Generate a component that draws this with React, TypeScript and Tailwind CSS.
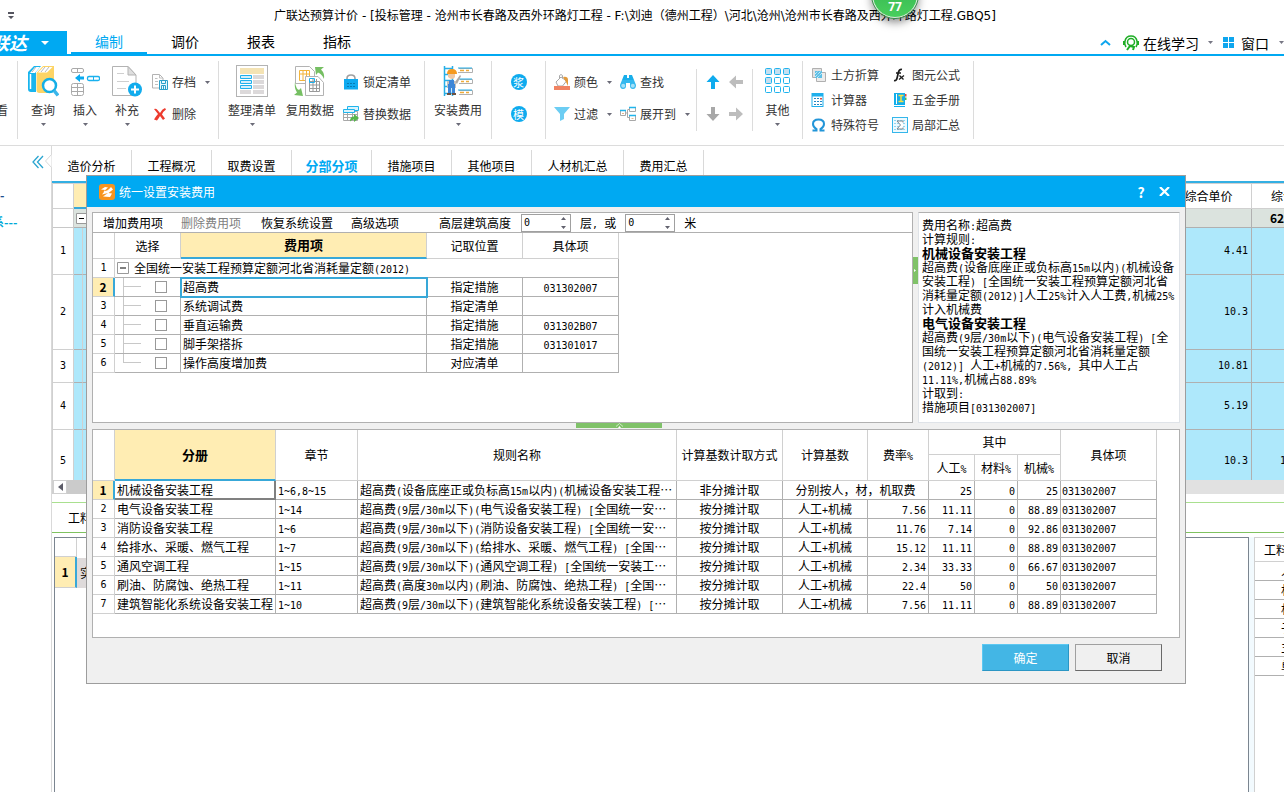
import React from 'react';

const mono = "font-['DejaVu_Sans_Mono',monospace] text-[10px]";

function Mix({ children }: { children: string }) {
  const parts = children.split(/([\x20-\x7e]+)/).filter((p) => p !== '');
  return (
    <>
      {parts.map((p, i) =>
        /^[\x20-\x7e]/.test(p) ? (
          <span key={i} className={`${mono} leading-none whitespace-pre`}>
            {p}
          </span>
        ) : (
          <React.Fragment key={i}>{p}</React.Fragment>
        ),
      )}
    </>
  );
}

function Caret({ className = 'text-[#6b6b78]' }: { className?: string }) {
  return (
    <svg width="5" height="3" viewBox="0 0 5 3" className={`shrink-0 ${className}`}>
      <path d="M0 0h5L2.5 3z" fill="currentColor" />
    </svg>
  );
}

/* ---------- ribbon icons ---------- */

const BooksIcon = () => (
  <svg width="32" height="32" viewBox="0 0 32 32">
    <path d="M1 7 7 1h7L9 7v20H4c-2 0-3-1-3-3z" fill="#19b5ee" />
    <path d="M3 8 8 2h5L8 8z" fill="#fff" />
    <path d="M3.500 9v15" stroke="#fff" strokeWidth="1.500" />
    <path d="M9.500 8 16 1h11v21l-4 6H12.500c-2 0-3-1-3-3z" fill="#fdd465" />
    <path d="M11 7.500 16.500 2h9L20 7.500z" fill="#fff" />
    <path d="m14 7 4-5m0 5 4-5M5 7l4-5" stroke="#b9b9b9" />
    <circle cx="22.500" cy="20.500" r="6.500" fill="#fff" stroke="#14aee6" strokeWidth="2.500" />
    <path d="m27 25.500 4 5" stroke="#3bb6ea" strokeWidth="3.500" />
  </svg>
);
const InsertIcon = () => (
  <svg width="30" height="32" viewBox="0 0 30 32" fill="none">
    <rect x="1.500" y="3.500" width="12" height="4" rx="1.500" stroke="#a9a9a9" />
    <path d="M7.500 4v3" stroke="#a9a9a9" />
    <path d="m5 13 5-4v2.500h4v3h-4V17z" fill="#0aabf0" />
    <rect x="17.500" y="11.500" width="12" height="4" rx="1.500" stroke="#19b1ee" strokeWidth="1.300" />
    <path d="M23.500 12v3" stroke="#19b1ee" />
    <rect x="1.500" y="18.500" width="12" height="12" rx="2" stroke="#a9a9a9" />
    <path d="M2 22.500h11M2 26.500h11M7.500 19v11" stroke="#a9a9a9" />
  </svg>
);
const SupplementIcon = () => (
  <svg width="32" height="32" viewBox="0 0 32 32" fill="none">
    <path d="M1.500 1.500H17L25 10v20.500H1.500z" fill="#fff" stroke="#b3b3b3" />
    <path d="M17 1.500V10h8z" fill="#dedede" stroke="#b3b3b3" />
    <path d="M6 8.500h7M6 16.500h12M6 23.500h9" stroke="#cfcfcf" />
    <circle cx="24" cy="24.500" r="7" fill="#12aced" />
    <path d="M24 20.500v8M20 24.500h8" stroke="#fff" strokeWidth="2" />
  </svg>
);
const ArrangeIcon = () => (
  <svg width="32" height="32" viewBox="0 0 32 32" fill="none">
    <rect x="0.500" y="0.500" width="31" height="31" fill="#fff" stroke="#b3b3b3" />
    <rect x="4" y="3" width="24" height="6" fill="#f4e3b4" />
    <path d="M17 10h11v4H17zM17 15h11v4H17zM17 20h11v4H17zM17 25h11v4H17zM4 25h11v4H4z" fill="#dcd9da" />
    <path d="M4.500 10.500h11v3h-11zM4.500 15.500h11v3h-11zM4.500 20.500h11v3h-11z" fill="#d5eefa" stroke="#1fb0ec" />
  </svg>
);
const ReuseIcon = () => (
  <svg width="32" height="32" viewBox="0 0 32 32" fill="none">
    <path d="M1.500 1.500h14l5 5v12h-19z" fill="#fff" stroke="#b3b3b3" />
    <path d="M5.500 5.500h10v10h-10zM5.500 9h10M9 5.500v10M12.500 5.500v10" stroke="#f3b53c" />
    <path d="M11.500 11.500H24l5.500 6v13h-18z" fill="#fff" stroke="#b3b3b3" />
    <path d="M15.500 16.500h10v10h-10zM15.500 20h10M15.500 23.500h10M19 14v12M22.500 14v12" stroke="#999" />
    <path d="M15.500 13.500h5v4h-5z" stroke="#1fb0ec" />
    <path d="M21 2h9l-3 2.500q4 4 3 9.500-2-5-6-6.500L22 10z" fill="#76bf63" />
    <path d="M1 17q1 7 4 8l2-2 2 8-9-1 3-2.500Q0 23 1 17z" fill="#76bf63" />
  </svg>
);
const InstallFeeIcon = () => (
  <svg width="32" height="32" viewBox="0 0 32 32" fill="none">
    <path d="M2.500 1v30M10.500 1v30M2 3.500h9M2 9.500h9M2 15.500h9M2 21.500h9M2 28.500h9" stroke="#27aee6" strokeWidth="1.500" />
    <path d="M17 3.500h13.500v4H16M18 14.500h12.500v4H17M17 25.500h13.500v4H17" stroke="#b0b0b0" />
    <path d="M16 3h14M17 14h13M16 25h14" stroke="#27aee6" />
    <path d="M18 5.500h4m2 0h3M19 16.500h3m2 0h3M18 27.500h4m2 0h3" stroke="#efac3c" strokeWidth="1.500" />
    <path d="M5 9q0-5 5-5t5 5z" fill="#f59a1f" />
    <path d="M6 9h7v3q-1 2-3 2t-4-2z" fill="#efc8a4" />
    <path d="m13 17 5-7 1 1-4 8z" fill="#b0a9a4" />
    <path d="M5 16h9v7H5z" fill="#c5c1be" />
    <path d="M7 15h5v4h1v9h-3v-5H9v5H6v-9h1z" fill="#3c86d8" />
    <path d="M5 28h4v2H5zM10 28h4v2h-4z" fill="#6d5140" />
  </svg>
);
const OtherIcon = () => (
  <svg width="26" height="26" viewBox="0 0 26 26" stroke="#1fb3ee">
    {[0, 1, 2].map((r) =>
      [0, 1, 2].map((c) => (
        <rect
          key={`${r}${c}`}
          x={0.5 + c * 9}
          y={0.5 + r * 9}
          width="6"
          height="6"
          rx="1"
          fill={r + c < 2 || r === 0 ? '#c5dff0' : '#fff'}
        />
      )),
    )}
  </svg>
);
const ArchiveIcon = () => (
  <svg width="16" height="16" viewBox="0 0 16 16" fill="none">
    <path d="M.5.500h7l3.500 3.500v10H.500z" fill="#fff" stroke="#b3b3b3" />
    <path d="M7.500.500V4H11M3 4.500h2.500M3 7.500h3M3 10.500h3" stroke="#c0c0c0" />
    <path d="M7.500 6.500h8v9h-8z" fill="#e9f7fd" stroke="#2a9fc9" />
    <path d="M9.500 6.500v3h4v-3M9.500 15v-3.500h4V15M11.500 12v3" stroke="#2a9fc9" />
  </svg>
);
const DeleteIcon = () => (
  <svg width="16" height="16" viewBox="0 0 16 16">
    <path d="M2 3q2-1 3.500 1L8 7q2-4 5-5l1 1.500q-3 2-4 5l3 4-2 1.500-3-4q-1 2-3 4.500l-3-1Q4 10 6 8z" fill="#ed3b2e" />
  </svg>
);
const LockIcon = () => (
  <svg width="16" height="16" viewBox="0 0 16 16" fill="none">
    <path d="M4 7V4.500Q4 1 8 1t4 3.500V7" stroke="#a0a0a0" strokeWidth="1.600" />
    <rect x="1" y="5" width="14" height="10.500" fill="#0faaf0" />
    <path d="M4 9.500h8M4 12.500h8" stroke="#087bb2" strokeDasharray="2 1" />
  </svg>
);
const ReplaceIcon = () => (
  <svg width="16" height="16" viewBox="0 0 16 16" fill="none">
    <path d="M4.500.500h11v4h-11z" fill="#d9f3fd" stroke="#20b5ec" />
    <path d="M.5 5.500h14v9H.500zM.5 8.500h14M.500 11.500h14M4.500 5v9M9.500 5v9" fill="#fff" stroke="#a8a8a8" />
    <path d="M.5 3.500h11v3H.500z" fill="#d9f3fd" stroke="#20b5ec" />
    <path d="M7 15.500q0-5 4-5V8l5 4-5 4v-2.500q-2 0-4 2z" fill="#57b54a" />
  </svg>
);
const ColorIcon = () => (
  <svg width="16" height="16" viewBox="0 0 16 16" fill="none">
    <path d="m2 8 5-5 5.500 4L8.500 12H4z" fill="#fff" stroke="#a8a8a8" />
    <path d="M5.500 4.500v-3q1.500-2 3 0v3" stroke="#a8a8a8" />
    <path d="M9 3q5-1 5 3v6l-2-4z" fill="#e39a3b" />
    <path d="M0 12h16v4H0z" fill="#f08362" />
  </svg>
);
const FilterIcon = () => (
  <svg width="16" height="16" viewBox="0 0 16 16">
    <path d="M0 1h16l-6 7v5l-4 2V8z" fill="#6ccdf3" />
  </svg>
);
const FindIcon = () => (
  <svg width="16" height="16" viewBox="0 0 16 16">
    <path d="M4 1h3v3h2V1h3l2 5H2z" fill="#18aeea" />
    <path d="M2 6h12l2 5q0 4-3 4t-3-3V9H6v3q0 3-3 3t-3-4z" fill="#34b8ee" />
    <circle cx="3.200" cy="11.700" r="2" fill="#a5e0f8" />
    <circle cx="12.800" cy="11.700" r="2" fill="#a5e0f8" />
  </svg>
);
const ExpandIcon = () => (
  <svg width="16" height="16" viewBox="0 0 16 16" fill="none" stroke="#a8a8a8">
    <path d="M.5 4.500h5v5h-5zM9.500 1.500h6v4h-6zM9.500 9.500h6v5h-6zM5.500 7h2m0-3v7.500M7.500 3.500h2m-2 8h2" />
    <path d="M0 4.500h6M9 1.500h7M9 9.500h7" stroke="#20b5ec" strokeWidth="1.500" />
    <path d="M2 7.500h2M11.500 12.500h2" stroke="#e6b98a" />
  </svg>
);
const Arrow = ({ className }: { className: string }) => (
  <svg width="14" height="14" viewBox="0 0 14 14" className={className}>
    <path d="m7 0 6.500 7H9v7H5V7H.500z" fill="currentColor" />
  </svg>
);
const EarthworkIcon = () => (
  <svg width="16" height="16" viewBox="0 0 16 16" fill="none">
    <path d="M1.500 1.500h9v9h-9z" fill="#e3e3e3" stroke="#b0b0b0" />
    <path d="M5.500 5.500h9v9h-9z" fill="#ececec" stroke="#b0b0b0" />
    <path d="M4 4h7v7H4z" fill="#5fc0e6" />
    <path d="m4 7 3-3m-3 6 6-6m-4 7 5-5" stroke="#fff" strokeDasharray="1 1" />
  </svg>
);
const CalcIcon = () => (
  <svg width="16" height="16" viewBox="0 0 16 16" fill="none">
    <path d="M.5 1h12v14H.500z" fill="#1fb0ec" />
    <path d="M1.500 4.500h10V14h-10z" fill="#fff" />
    <path d="M3 6.500h6M3 9.500h8M3 12.500h8" stroke="#2286c4" strokeDasharray="2 1" />
    <path d="M9 6h2v1.500H9z" fill="#e04a3f" />
  </svg>
);
const OmegaIcon = () => (
  <svg width="16" height="16" viewBox="0 0 16 16" fill="none">
    <path d="M1.500 13.500h4V12Q2 10 2 7q0-4.500 5.500-4.500T13 7q0 3-3.500 5v1.500h4" stroke="#2295d8" strokeWidth="2" />
  </svg>
);
const FxIcon = () => (
  <svg width="16" height="16" viewBox="0 0 16 16" fill="none" stroke="#1c1c1c">
    <path d="M2 13.500q2.500.5 3.200-3L6.500 5Q7.500 2 10 2.500M4 6h5" strokeWidth="1.700" />
    <path d="m7.500 8.500 4 4m.5-4-5 4" strokeWidth="1.300" />
  </svg>
);
const HandbookIcon = () => (
  <svg width="16" height="16" viewBox="0 0 16 16" fill="none">
    <path d="M2 1h11v12H2z" fill="#12aeeb" />
    <path d="M4.500 2v10" stroke="#fff" />
    <path d="M6.500 3.500h5M6.500 9.500h5M9 3.500v6" stroke="#f6e044" strokeWidth="1.500" />
    <path d="M13 2h1.500v2.500H13z" fill="#e04a3f" />
    <path d="M13 5.500h1.500V8H13z" fill="#57b54a" />
    <path d="M2 14.500h11" stroke="#12aeeb" />
  </svg>
);
const SumIcon = () => (
  <svg width="16" height="16" viewBox="0 0 16 16" fill="none">
    <rect x="0.500" y="0.500" width="15" height="15" fill="#eefaff" stroke="#35b6ea" />
    <path d="M2 3.500h12M2 6.500h12M2 9.500h12M2 12.500h12" stroke="#8fd6f2" strokeDasharray="2 1" />
    <path d="M11 5.500V4H5l3.500 4L5 12h6v-1.500" fill="#fff" stroke="#7d8790" />
  </svg>
);

/* ---------- ribbon pieces ---------- */

const Group = ({ className = '', children }: { className?: string; children?: React.ReactNode }) => (
  <div className={`flex h-[78px] shrink-0 border-r border-[#dcdcdc] ${className}`}>{children}</div>
);

const Big = ({
  icon,
  label,
  caret = true,
  className,
}: {
  icon: React.ReactNode;
  label: string;
  caret?: boolean;
  className: string;
}) => (
  <button type="button" className={`flex flex-col items-center pt-1 ${className}`}>
    <span className="flex h-8 items-center">{icon}</span>
    <span className="mt-1 mb-1 whitespace-nowrap leading-[18px]">{label}</span>
    {caret && <Caret />}
  </button>
);

const Small = ({
  icon,
  label,
  caret = false,
  className = 'h-8',
}: {
  icon: React.ReactNode;
  label: string;
  caret?: boolean;
  className?: string;
}) => (
  <button type="button" className={`flex items-center whitespace-nowrap ${className}`}>
    {icon}
    <span className="ml-1">{label}</span>
    {caret && <Caret className="ml-[9px] text-[#6b6b78]" />}
  </button>
);

const RoundIcon = ({ text }: { text: string }) => (
  <button
    type="button"
    className="flex size-4 items-center justify-center rounded-full bg-[#0fabee] text-[11px] leading-4 text-white"
  >
    {text}
  </button>
);

function Ribbon() {
  return (
    <div className="flex h-[90px] border-b border-[#dcdcdc] pt-[5px] text-xs text-[#333]">
      <Group className="w-[18px] justify-end overflow-hidden">
        <span className="mr-[9px] pt-10 leading-[18px]">看</span>
      </Group>
      <Group className="w-[201px] pl-1">
        <Big icon={<BooksIcon />} label="查询" className="w-[42px]" />
        <Big icon={<InsertIcon />} label="插入" className="w-[42px]" />
        <Big icon={<SupplementIcon />} label="补充" className="w-[42px]" />
        <div className="ml-1 flex flex-col pt-[5px]">
          <Small icon={<ArchiveIcon />} label="存档" caret />
          <Small icon={<DeleteIcon />} label="删除" />
        </div>
      </Group>
      <Group className="w-[206px] pl-1">
        <Big icon={<ArrangeIcon />} label="整理清单" className="w-[58px]" />
        <Big icon={<ReuseIcon />} label="复用数据" caret={false} className="w-[58px]" />
        <div className="ml-1 flex flex-col pt-[5px]">
          <Small icon={<LockIcon />} label="锁定清单" />
          <Small icon={<ReplaceIcon />} label="替换数据" />
        </div>
      </Group>
      <Group className="w-[67px]">
        <Big icon={<InstallFeeIcon />} label="安装费用" className="w-full" />
      </Group>
      <Group className="w-[54px] flex-col items-center gap-4 pt-[13px]">
        <RoundIcon text="浆" />
        <RoundIcon text="模" />
      </Group>
      <Group className="w-[257px] pl-2">
        <div className="flex w-[66px] flex-col pt-[5px]">
          <Small icon={<ColorIcon />} label="颜色" caret />
          <Small icon={<FilterIcon />} label="过滤" caret />
        </div>
        <div className="flex w-[76px] flex-col pt-[5px]">
          <Small icon={<FindIcon />} label="查找" />
          <Small icon={<ExpandIcon />} label="展开到" caret />
        </div>
        <div className="my-2 grid w-[57px] grid-cols-2 content-start justify-items-center gap-y-[18px] border-x border-[#dcdcdc] px-1 pt-[6px]">
          <Arrow className="text-[#0fabee]" />
          <Arrow className="-rotate-90 text-[#bdbdbd]" />
          <Arrow className="rotate-180 text-[#a8a8a8]" />
          <Arrow className="rotate-90 text-[#bdbdbd]" />
        </div>
        <Big icon={<OtherIcon />} label="其他" className="w-[49px]" />
      </Group>
      <Group className="w-[171px] pl-2 pt-px">
        <div className="flex w-[81px] flex-col">
          <Small icon={<EarthworkIcon />} label="土方折算" className="h-[25px]" />
          <Small icon={<CalcIcon />} label="计算器" className="h-[25px]" />
          <Small icon={<OmegaIcon />} label="特殊符号" className="h-[25px]" />
        </div>
        <div className="flex flex-col">
          <Small icon={<FxIcon />} label="图元公式" className="h-[25px]" />
          <Small icon={<HandbookIcon />} label="五金手册" className="h-[25px]" />
          <Small icon={<SumIcon />} label="局部汇总" className="h-[25px]" />
        </div>
      </Group>
    </div>
  );
}

function Header() {
  return (
    <header>
      <div className="flex h-[31px] items-center">
        <svg width="6" height="8" viewBox="0 0 6 8" className="ml-2 shrink-0 fill-[#55555f]">
          <path d="M0 0h6v2H0zM0 4h6L3 7z" />
        </svg>
        <h1 className="flex-1 pr-7 text-center font-['DejaVu_Sans','Noto_Sans_CJK_SC',sans-serif] text-xs whitespace-nowrap">
          广联达预算计价 - [投标管理 - 沧州市长春路及西外环路灯工程 - F:\刘迪（德州工程）\河北\沧州\沧州市长春路及西外环路灯工程.GBQ5]
        </h1>
      </div>
      <div className="flex h-[25px] border-b-2 border-[#00a9f2] text-sm">
        <button
          type="button"
          className="flex w-[67px] items-center justify-end overflow-hidden bg-[#00a9f2] pr-[18px] text-lg leading-[23px] font-bold text-white italic"
        >
          <span className="whitespace-nowrap">联达</span>
          <svg width="8" height="4" viewBox="0 0 8 4" className="ml-[14px] shrink-0">
            <path d="M0 0h8L4 4z" fill="#fff" />
          </svg>
        </button>
        <nav className="ml-1 flex text-center leading-[21px]">
          <a href="#edit" className="w-[76px] border-b-2 border-[#00a9f2] text-[#00a9f2]">
            编制
          </a>
          <a href="#price" className="w-[76px]">
            调价
          </a>
          <a href="#report" className="w-[76px]">
            报表
          </a>
          <a href="#index" className="w-[76px]">
            指标
          </a>
        </nav>
        <div className="ml-auto flex items-center whitespace-nowrap">
          <svg width="11" height="7" viewBox="0 0 11 7" fill="none">
            <path d="m1 6 4.500-4L10 6" stroke="#0fa6ee" strokeWidth="2" />
          </svg>
          <button type="button" className="ml-3 flex items-center">
            <svg width="16" height="16" viewBox="0 0 16 16" fill="none" stroke="#1fae26">
              <path d="M3 12Q1 9 2 6q1-5 6-5t6 5q1 3-1 6" strokeWidth="1.600" />
              <circle cx="8" cy="7" r="3.500" strokeWidth="1.500" />
              <path d="M1 6v4M15 6v4" strokeWidth="2" />
              <path d="m4 15 3-4 4 1-1 3" strokeWidth="2" />
            </svg>
            <span className="ml-1">在线学习</span>
            <Caret className="ml-[9px] text-[#777784]" />
          </button>
          <button type="button" className="ml-[10px] flex items-center">
            <svg width="12" height="12" viewBox="0 0 12 12" fill="#0fa6ee">
              <path d="M0 0h5v5H0zM6 0h5v5H6zM0 6h5v5H0zM6 6h5v5H6z" />
            </svg>
            <span className="ml-[6px]">窗口</span>
            <Caret className="ml-[10px] text-[#777784]" />
          </button>
        </div>
      </div>
      <Ribbon />
    </header>
  );
}

/* ---------- page behind the dialog ---------- */

const pageTabs = [
  { label: '造价分析', w: 'w-20' },
  { label: '工程概况', w: 'w-20' },
  { label: '取费设置', w: 'w-20' },
  { label: '分部分项', w: 'w-20', active: true },
  { label: '措施项目', w: 'w-20' },
  { label: '其他项目', w: 'w-20' },
  { label: '人材机汇总', w: 'w-[92px]' },
  { label: '费用汇总', w: 'w-20' },
];

const pageRows = [
  { h: 'h-[47px]', price: '4.41', total: '' },
  { h: 'h-[75px]', price: '10.3', total: '' },
  { h: 'h-[33px]', price: '10.81', total: '' },
  { h: 'h-[47px]', price: '5.19', total: '' },
  { h: 'h-[62px]', price: '10.3', total: '1' },
];

function Page() {
  return (
    <main className="flex min-w-0 flex-1 flex-col">
      <nav className="flex h-[37px] shrink-0 border-b-2 border-[#33afe3] pt-1 text-center text-xs">
        {pageTabs.map((t) => (
          <a
            key={t.label}
            href="#tab"
            className={`h-[25px] border-r border-[#d9d9d9] pt-[6px] leading-5 whitespace-nowrap ${t.w} ${
              t.active ? 'text-[13px] font-bold text-[#00a9f2]' : ''
            }`}
          >
            {t.label}
          </a>
        ))}
      </nav>
      <div className="shrink-0 overflow-hidden border-l border-[#d0d0d0]">
        <div className="h-[297px] overflow-hidden">
          <table className="w-[calc(100%+54px)] table-fixed border-separate border-spacing-0 text-xs">
            <colgroup>
              <col className="w-[21px]" />
              <col className="w-[9px]" />
              <col />
              <col className="w-[86px]" />
              <col className="w-[86px]" />
            </colgroup>
            <thead>
              <tr className="h-[26px] text-center">
                <th className="border-t border-r border-b border-[#d0d0d0]" />
                <th colSpan={2} className="border-t border-b-2 border-t-[#d0d0d0] border-b-[#38a8d8] bg-[#ffedb3]" />
                <th className="border-t border-r border-b border-[#d0d0d0] p-0 font-normal">综合单价</th>
                <th className="border-t border-b border-[#d0d0d0] p-0 font-normal">综合合价</th>
              </tr>
            </thead>
            <tbody>
              <tr className="h-[19px] bg-[#dbe3de]">
                <td className="border-r border-b border-[#c8c8c8] bg-white p-0" />
                <td colSpan={2} className="border-b border-[#b0b0b0] p-0">
                  <svg width="11" height="11" viewBox="0 0 11 11" className="ml-[2px] block">
                    <path d="M.5.500h10v10H.500z" fill="#fff" stroke="#999" />
                    <path d="M3 5.500h5" stroke="#000" />
                  </svg>
                </td>
                <td className="border-r border-b border-[#b0b0b0] p-0" />
                <td className="border-b border-[#b0b0b0] p-0 pl-[18px] text-xs leading-none font-bold">62</td>
              </tr>
              {pageRows.map((r, i) => (
                <tr key={i} className={`bg-[#aee8fb] ${mono} ${r.h}`}>
                  <td className="border-r border-b border-[#d0d0d0] bg-white p-0 text-center">{i + 1}</td>
                  <td className="border-r border-b border-r-[#d0d0d0] border-b-[#b0b0b0] p-0" />
                  <td className="border-b border-[#b0b0b0] p-0" />
                  <td className="border-r border-b border-[#b0b0b0] p-0 pr-[3px] text-right">{r.price}</td>
                  <td className="border-b border-[#b0b0b0] p-0 pl-7">{r.total}</td>
                </tr>
              ))}
            </tbody>
          </table>
        </div>
        <div className="flex h-[14px] bg-[#e1e1e1]">
          <button type="button" aria-label="向左滚动" className="flex w-[14px] items-center justify-center border border-[#d0d0d0] bg-white">
            <svg width="5" height="8" viewBox="0 0 5 8">
              <path d="M5 0v8L0 4z" fill="#5c5c68" />
            </svg>
          </button>
          <div className="w-1/2 bg-[#cbcbcb]" />
        </div>
      </div>
      <div className="mt-2 mb-1 flex h-[31px] shrink-0 items-center border-y border-t-[#a9e08f] border-b-[#7fc25f] pl-4 text-xs">
        <a href="#detail">工料机显示</a>
      </div>
      <div className="flex min-h-0 flex-1">
        <div className="ml-[2px] min-w-0 flex-1 border-x border-t border-[#7b8590]">
          <table className="w-full table-fixed border-separate border-spacing-0 text-xs">
            <colgroup>
              <col className="w-[22px]" />
              <col />
            </colgroup>
            <tbody>
              <tr className="h-[19px]">
                <td className="border-r border-b border-[#d0d0d0] p-0" />
                <td className="p-0" />
              </tr>
              <tr className="h-[31px]">
                <td className="border-r-2 border-b border-r-[#38a8d8] border-b-[#d0d0d0] bg-[#ffedb3] p-0 text-center text-xs font-bold">1</td>
                <td className="p-0">
                  <span className="block w-10 bg-[#dedada] pl-[3px] leading-[30px]">实</span>
                </td>
              </tr>
            </tbody>
          </table>
        </div>
        <div className="w-[5px] bg-[#f2fafe]" />
        <div className="w-[30px] overflow-hidden border-t border-l border-[#d0d0d0]">
          <table className="w-full table-fixed border-separate border-spacing-0 text-xs">
            <thead>
              <tr className="h-6">
                <th className="border-b border-[#d0d0d0] p-0 pl-[9px] text-left font-normal whitespace-nowrap">工料</th>
              </tr>
            </thead>
            <tbody>
              {['人', '材', '机', '子', '主', '单'].map((t) => (
                <tr key={t} className="h-[19px]">
                  <td className="overflow-hidden border-b border-[#b0b0b0] p-0 pl-[26px] leading-[18px] whitespace-nowrap">{t}</td>
                </tr>
              ))}
            </tbody>
          </table>
        </div>
      </div>
    </main>
  );
}

/* ---------- dialog ---------- */

const feeRows = [
  { name: '超高费', place: '指定措施', code: '031302007' },
  { name: '系统调试费', place: '指定清单', code: '' },
  { name: '垂直运输费', place: '指定措施', code: '031302B07' },
  { name: '脚手架搭拆', place: '指定措施', code: '031301017' },
  { name: '操作高度增加费', place: '对应清单', code: '' },
];

const ruleRows = [
  ['机械设备安装工程', '1~6,8~15', '超高费(设备底座正或负标高15m以内)(机械设备安装工程…', '非分摊计取', '分别按人，材，机取费', '', '25', '0', '25'],
  ['电气设备安装工程', '1~14', '超高费(9层/30m以下)(电气设备安装工程) [全国统一安…', '按分摊计取', '人工+机械', '7.56', '11.11', '0', '88.89'],
  ['消防设备安装工程', '1~6', '超高费(9层/30m以下)(消防设备安装工程) [全国统一安…', '按分摊计取', '人工+机械', '11.76', '7.14', '0', '92.86'],
  ['给排水、采暖、燃气工程', '1~7', '超高费(9层/30m以下)(给排水、采暖、燃气工程) [全国…', '按分摊计取', '人工+机械', '15.12', '11.11', '0', '88.89'],
  ['通风空调工程', '1~15', '超高费(9层/30m以下)(通风空调工程) [全国统一安装工…', '按分摊计取', '人工+机械', '2.34', '33.33', '0', '66.67'],
  ['刷油、防腐蚀、绝热工程', '1~11', '超高费(高度30m以内)(刷油、防腐蚀、绝热工程) [全国…', '按分摊计取', '人工+机械', '22.4', '50', '0', '50'],
  ['建筑智能化系统设备安装工程', '1~10', '超高费(9层/30m以下)(建筑智能化系统设备安装工程) […', '按分摊计取', '人工+机械', '7.56', '11.11', '0', '88.89'],
];

const info = [
  { t: '费用名称:超高费' },
  { t: '计算规则:' },
  { t: '机械设备安装工程', b: true },
  { t: '超高费(设备底座正或负标高15m以内)(机械设备' },
  { t: '安装工程) [全国统一安装工程预算定额河北省' },
  { t: '消耗量定额(2012)]人工25%计入人工费,机械25%' },
  { t: '计入机械费' },
  { t: '电气设备安装工程', b: true },
  { t: '超高费(9层/30m以下)(电气设备安装工程) [全' },
  { t: '国统一安装工程预算定额河北省消耗量定额' },
  { t: '(2012)] 人工+机械的7.56%, 其中人工占' },
  { t: '11.11%,机械占88.89%' },
  { t: '计取到:' },
  { t: '措施项目[031302007]' },
];

const th = 'border-r border-b border-[#d0d0d0] p-0 text-center font-normal';
const td = 'border-r border-b border-[#b0b0b0] p-0 leading-[18px] whitespace-nowrap';
const thActive = 'border-r border-b-2 border-r-[#d0d0d0] border-b-[#38a8d8] bg-[#ffedb3] p-0 text-center text-[13px] font-bold';

function RowNo({ n, active }: { n: number; active: boolean }) {
  return (
    <td
      className={
        active
          ? 'border-r-2 border-b border-r-[#38a8d8] border-b-[#d0d0d0] bg-[#ffedb3] p-0 text-center text-xs leading-[18px] font-bold'
          : `border-r border-b border-[#d0d0d0] p-0 text-center leading-[18px] ${mono}`
      }
    >
      {n}
    </td>
  );
}

function Spin({ id, label }: { id: string; label: string }) {
  return (
    <span className="flex h-[18px] w-[50px] items-center border border-[#a0a0a0] bg-white pr-1 pl-[2px]">
      <input id={id} aria-label={label} defaultValue="0" className={`w-0 flex-1 outline-none ${mono}`} />
      <svg width="5" height="12" viewBox="0 0 5 12" fill="#62626e">
        <path d="M0 3h5L2.500 0zM0 9h5L2.500 12z" />
      </svg>
    </span>
  );
}

function FeeTable() {
  return (
    <table className="w-[526px] table-fixed border-separate border-spacing-0">
      <colgroup>
        <col className="w-[22px]" />
        <col className="w-[66px]" />
        <col className="w-[246px]" />
        <col className="w-[96px]" />
        <col className="w-[96px]" />
      </colgroup>
      <thead>
        <tr className="h-[26px]">
          <th className={th} />
          <th className={th}>选择</th>
          <th className={thActive}>费用项</th>
          <th className={th}>记取位置</th>
          <th className={th}>具体项</th>
        </tr>
      </thead>
      <tbody>
        <tr className="h-[19px]">
          <RowNo n={1} active={false} />
          <td colSpan={4} className={td}>
            <div className="flex items-center pl-[2px]">
              <svg width="12" height="12" viewBox="0 0 12 12" className="mr-[5px]">
                <path d="M.5.500h11v11H.500z" fill="#fff" stroke="#999" />
                <path d="M3 6h6" stroke="#000" />
              </svg>
              <span>
                <Mix>全国统一安装工程预算定额河北省消耗量定额(2012)</Mix>
              </span>
            </div>
          </td>
        </tr>
        {feeRows.map((r, i) => (
          <tr key={r.name} className="h-[19px]">
            <RowNo n={i + 2} active={i === 0} />
            <td className={td}>
              <div className="flex h-[18px] items-center pl-2">
                <span className={`flex w-[18px] self-start border-l border-[#c8c8c8] ${i === 4 ? 'h-[9px]' : 'h-[18px]'}`}>
                  <span className="h-[9px] w-full border-b border-[#c8c8c8]" />
                </span>
                <input
                  type="checkbox"
                  aria-label={r.name}
                  className="ml-[14px] size-3 appearance-none border border-[#999] bg-white"
                />
              </div>
            </td>
            <td className={`${td} pl-[2px] ${i === 0 ? 'outline-2 -outline-offset-1 outline-[#38a8d8]' : ''}`}>{r.name}</td>
            <td className={`${td} text-center`}>{r.place}</td>
            <td className={`${td} text-center`}>
              <Mix>{r.code}</Mix>
            </td>
          </tr>
        ))}
      </tbody>
    </table>
  );
}

function RuleTable() {
  return (
    <table className="w-[1064px] table-fixed border-separate border-spacing-0">
      <colgroup>
        <col className="w-[22px]" />
        <col className="w-[161px]" />
        <col className="w-[82px]" />
        <col className="w-[319px]" />
        <col className="w-[106px]" />
        <col className="w-[85px]" />
        <col className="w-[61px]" />
        <col className="w-[46px]" />
        <col className="w-[43px]" />
        <col className="w-[43px]" />
        <col className="w-[96px]" />
      </colgroup>
      <thead>
        <tr className="h-[25px]">
          <th rowSpan={2} className={th} />
          <th rowSpan={2} className={thActive}>
            分册
          </th>
          <th rowSpan={2} className={th}>
            章节
          </th>
          <th rowSpan={2} className={th}>
            规则名称
          </th>
          <th rowSpan={2} className={th}>
            计算基数计取方式
          </th>
          <th rowSpan={2} className={th}>
            计算基数
          </th>
          <th rowSpan={2} className={th}>
            <Mix>费率%</Mix>
          </th>
          <th colSpan={3} className={th}>
            其中
          </th>
          <th rowSpan={2} className={th}>
            具体项
          </th>
        </tr>
        <tr className="h-[26px]">
          <th className={th}>
            <Mix>人工%</Mix>
          </th>
          <th className={th}>
            <Mix>材料%</Mix>
          </th>
          <th className={th}>
            <Mix>机械%</Mix>
          </th>
        </tr>
      </thead>
      <tbody>
        {ruleRows.map((r, i) => (
          <tr key={r[0]} className="h-[19px]">
            <RowNo n={i + 1} active={i === 0} />
            <td
              className={
                i === 0
                  ? 'border-r-2 border-b-2 border-[#808080] p-0 pl-[2px] leading-[17px] whitespace-nowrap'
                  : `${td} pl-[2px]`
              }
            >
              {r[0]}
            </td>
            <td className={`${td} pl-[2px]`}>
              <Mix>{r[1]}</Mix>
            </td>
            <td className={`${td} overflow-hidden pl-[2px]`}>
              <Mix>{r[2]}</Mix>
            </td>
            <td className={`${td} text-center`}>{r[3]}</td>
            <td colSpan={i === 0 ? 2 : 1} className={`${td} text-center`}>
              <Mix>{r[4]}</Mix>
            </td>
            {i > 0 && (
              <td className={`${td} pr-[2px] text-right`}>
                <Mix>{r[5]}</Mix>
              </td>
            )}
            {[6, 7, 8].map((c) => (
              <td key={c} className={`${td} pr-[2px] text-right`}>
                <Mix>{r[c]}</Mix>
              </td>
            ))}
            <td className={`${td} pl-px`}>
              <Mix>031302007</Mix>
            </td>
          </tr>
        ))}
      </tbody>
    </table>
  );
}

function Dialog() {
  return (
    <section
      role="dialog"
      aria-labelledby="dialog-title"
      className="absolute top-[175px] right-[98px] left-[86px] border border-[#9d9d9d] bg-[#f0f0f0] text-xs text-black"
    >
      <div className="flex h-[31px] items-center bg-[#00a9f2] pr-[15px] pl-3 text-white">
        <svg width="16" height="16" viewBox="0 0 16 16" fill="none">
          <rect width="16" height="16" rx="3" fill="#f7941e" />
          <path d="M2 5.500 6 3l3 .5-4.500 4Q9 7 12 3l2 2.500-4.500 3.500 3.500.500-2 3.500-7-.5L9 9l-6 1.500L6.500 6z" fill="#fff" />
        </svg>
        <h2 id="dialog-title" className="ml-1">
          统一设置安装费用
        </h2>
        <button type="button" aria-label="帮助" className="ml-auto w-3 text-sm leading-none font-bold">
          ?
        </button>
        <button type="button" aria-label="关闭" className="ml-3">
          <svg width="11" height="9" viewBox="0 0 11 9">
            <path d="m1 0 9 9M10 0 1 9" stroke="#fff" strokeWidth="2.200" />
          </svg>
        </button>
      </div>
      <div className="px-[5px] pt-[5px] pb-3">
        <div className="flex">
          <div className="min-w-0 flex-1 border border-[#b0b0b0] bg-white">
            <div className="flex h-5 items-center border-b border-[#b0b0b0] pl-[10px] whitespace-nowrap">
              <button type="button">增加费用项</button>
              <button type="button" disabled className="ml-[18px] text-[#808080]">
                删除费用项
              </button>
              <button type="button" className="ml-5">
                恢复系统设置
              </button>
              <button type="button" className="ml-[18px]">
                高级选项
              </button>
              <label htmlFor="floors" className="mr-[10px] ml-10">
                高层建筑高度
              </label>
              <Spin id="floors" label="高层建筑高度（层）" />
              <label htmlFor="metres" className="mx-[9px]">
                <Mix>层, 或</Mix>
              </label>
              <Spin id="metres" label="高层建筑高度（米）" />
              <span className="ml-[9px]">米</span>
            </div>
            <FeeTable />
          </div>
          <div className="flex w-[5px] flex-col pt-[45px]">
            <button type="button" aria-label="收起说明" className="flex h-[27px] w-[5px] items-center bg-[#80c269]">
              <svg width="4" height="5" viewBox="0 0 4 5">
                <path d="m1 1 2 1.500L1 4z" fill="#fff" />
              </svg>
            </button>
          </div>
          <div className="h-[211px] w-[262px] shrink-0 border border-t-[#b0b0b0] border-r-[#dfe3e8] border-b-[#dfe3e8] border-l-[#dfe3e8] bg-white pt-[5px] pl-[3px] whitespace-nowrap">
            {info.map((l, i) => (
              <p key={i} className={`leading-[14px] ${l.b ? 'text-[13px] font-bold' : ''}`}>
                <Mix>{l.t}</Mix>
              </p>
            ))}
          </div>
        </div>
        <div className="flex h-[6px] pl-[484px]">
          <button type="button" aria-label="收起表格" className="flex h-[5px] w-[86px] items-center justify-center bg-[#80c269]">
            <svg width="9" height="5" viewBox="0 0 9 5" fill="none">
              <path d="m1 3.500 3.500-3 3.500 3" stroke="#cfe9c6" />
              <path d="M3 5 4.500 3 6 5z" fill="#fff" />
            </svg>
          </button>
        </div>
        <div className="border border-[#b0b0b0] bg-white pb-[23px]">
          <RuleTable />
        </div>
        <div className="mt-[6px] flex justify-end gap-[6px] pr-[18px]">
          <button
            type="button"
            className="h-[27px] w-[87px] border border-t-[#5cc8f2] border-r-[#2b96c4] border-b-[#2b96c4] border-l-[#5cc8f2] bg-[#43b6e5] text-white"
          >
            确定
          </button>
          <button
            type="button"
            className="h-[27px] w-[87px] border border-t-[#a0a0a0] border-r-[#696969] border-b-[#696969] border-l-[#a0a0a0] bg-[#f0f0f0]"
          >
            取消
          </button>
        </div>
      </div>
    </section>
  );
}

export default function App() {
  return (
    <div className="relative flex h-screen flex-col overflow-hidden bg-white font-['Noto_Sans_CJK_SC',sans-serif] text-black">
      <Header />
      <div className="flex min-h-0 flex-1">
        <aside className="relative w-[52px] shrink-0 border-r border-[#d9d9d9] text-xs">
          <button type="button" aria-label="收起" className="absolute top-[9px] left-8">
            <svg width="12" height="14" viewBox="0 0 12 14" fill="none" stroke="#2aa5d0" strokeWidth="1.300">
              <path d="M6.500 1 1 7l5.500 6M11 1 5.500 7l5.500 6" />
            </svg>
          </button>
          <svg width="7" height="14" viewBox="0 0 7 14" fill="#fff" stroke="#d9d9d9" className="absolute top-2 -right-px">
            <path d="M6.500.500.500 7l6 6.500" />
          </svg>
          <div className="flex flex-col overflow-hidden pt-[38px] font-bold">
            <span className="leading-[22px] text-[#1d4e8f]">-</span>
            <span className="-ml-2 pt-[6px] leading-[20px] whitespace-nowrap text-[#00a9d8]">系---</span>
          </div>
        </aside>
        <Page />
      </div>
      <Dialog />
      <div className="absolute -top-7 left-[872px] flex size-[46px] items-end justify-center rounded-full border border-[#dff0df] bg-linear-to-b from-[#2fae4d] to-[#49cf5d] pb-px text-xs font-bold text-white shadow-[0_4px_10px_rgba(0,0,0,0.5)] outline outline-[#3f8f50]">
        <span className="font-['Open_Sans',sans-serif] leading-[18px]">77</span>
      </div>
    </div>
  );
}
